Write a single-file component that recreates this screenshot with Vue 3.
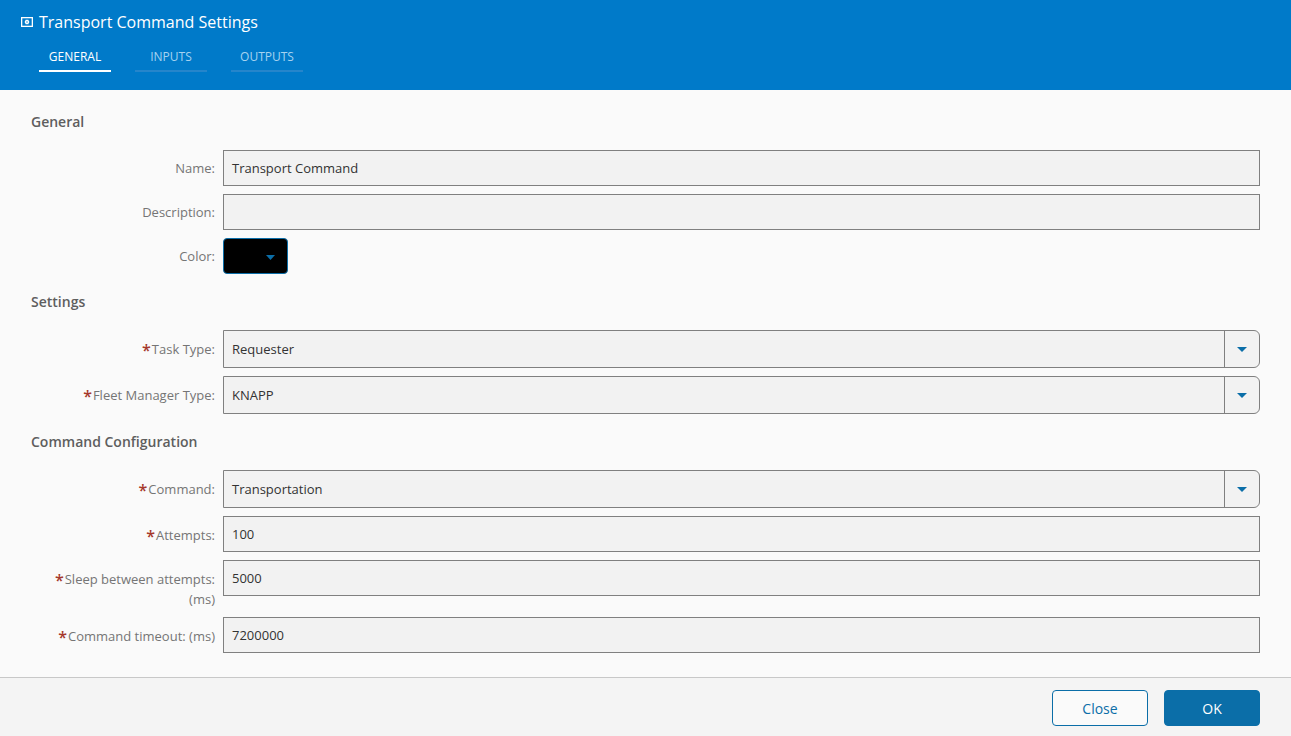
<script setup>
const tabs = ['General', 'Inputs', 'Outputs']
const sections = [
  { title: 'General', cls: 'tight', rows: [
    { label: 'Name:', value: 'Transport Command' },
    { label: 'Description:', value: '' },
    { label: 'Color:', type: 'color' }
  ] },
  { title: 'Settings', rows: [
    { label: 'Task Type:', value: 'Requester', req: true, type: 'select' },
    { label: 'Fleet Manager Type:', value: 'KNAPP', req: true, type: 'select' }
  ] },
  { title: 'Command Configuration', rows: [
    { label: 'Command:', value: 'Transportation', req: true, type: 'select' },
    { label: 'Attempts:', value: '100', req: true },
    { label: 'Sleep between attempts: (ms)', value: '5000', req: true },
    { label: 'Command timeout: (ms)', value: '7200000', req: true }
  ] }
]
</script>

<template>
  <div class="page">
    <header class="head">
      <div class="title">
        <svg class="ticon" width="12" height="10" viewBox="0 0 12 10">
          <rect x="0" y="0" width="12" height="10" fill="#fff" />
          <rect x="1.300" y="1.300" width="9.400" height="7.400" fill="#007ac9" />
          <path d="M6 2.200l.6 .8 .9-.2 .1 .9 .8 .5-.5 .8 .5 .8-.8 .5-.1 .9-.9-.2-.6 .8-.6-.8-.9 .2-.1-.9-.8-.5 .5-.8-.5-.8 .8-.5 .1-.9 .9 .2z" fill="#fff" />
          <circle cx="6" cy="5" r=".7" fill="#007ac9" />
        </svg>
        <span>Transport Command Settings</span>
      </div>
      <nav class="tabs">
        <div v-for="(t, i) in tabs" :key="t" class="tab" :class="{ on: i === 0 }">{{ t }}</div>
      </nav>
    </header>

    <main class="body">
      <section v-for="s in sections" :key="s.title" :class="s.cls">
        <h2>{{ s.title }}</h2>
        <div class="rows">
          <div v-for="r in s.rows" :key="r.label" class="row">
            <label><span v-if="r.req" class="req">*</span>{{ r.label }}</label>
            <div v-if="r.type === 'color'" class="color">
              <svg class="caret" width="9" height="5" viewBox="0 0 9 5"><path d="M0 0h9L4.500 5z" fill="#0b6ea8" /></svg>
            </div>
            <div v-else-if="r.type === 'select'" class="select">
              <span class="val">{{ r.value }}</span>
              <span class="drop">
                <svg width="10" height="5" viewBox="0 0 10 5"><path d="M0 0h10L5 5z" fill="#0b6ea8" /></svg>
              </span>
            </div>
            <div v-else class="input">{{ r.value }}</div>
          </div>
        </div>
      </section>
    </main>

    <footer class="foot">
      <button class="btn ghost">Close</button>
      <button class="btn solid">OK</button>
    </footer>
  </div>
</template>

<style>
html, body { margin: 0; }
</style>

<style scoped>
.page {
  height: 736px;
  display: flex;
  flex-direction: column;
  overflow: hidden;
  font-family: "Open Sans", "Noto Sans", sans-serif;
  font-size: 13px;
  color: #333;
}
.head {
  height: 90px;
  flex: none;
  box-sizing: border-box;
  background: #007ac9;
  padding: 11px 0 0 21px;
  color: #fff;
}
.title {
  display: flex;
  align-items: center;
  gap: 6px;
  font-size: 16px;
  line-height: 22px;
}
.ticon { flex: none; }
.tabs {
  display: flex;
  gap: 24px;
  margin: 9px 0 0 18px;
}
.tab {
  width: 72px;
  height: 30px;
  box-sizing: border-box;
  border-bottom: 2px solid #2585cb;
  text-align: center;
  font-size: 12px;
  line-height: 30px;
  text-transform: uppercase;
  color: #a6d3f0;
}
.tab.on {
  color: #fff;
  border-bottom-color: #fff;
}
.body {
  flex: 1;
  background: #fafafa;
  padding: 22px 31px 0;
}
section + section { margin-top: 18px; }
h2 {
  margin: 0 0 18px;
  font-size: 14px;
  line-height: 20px;
  font-weight: 600;
  color: #5e5e5e;
}
.rows {
  display: flex;
  flex-direction: column;
  gap: 8px;
}
.row {
  display: flex;
  align-items: flex-start;
  gap: 8px;
}
label {
  width: 184px;
  flex: none;
  padding-top: 9px;
  line-height: 20px;
  text-align: right;
  color: #757575;
}
.tight label { padding-top: 8px; }
.req {
  color: #a5382b;
  font-size: 16px;
  font-weight: 600;
  line-height: 1;
  margin-right: 1px;
  vertical-align: -2px;
}
.input, .select {
  flex: 1;
  box-sizing: border-box;
  background: #f2f2f2;
  border: 1px solid #808080;
  padding: 0 8px;
  color: #333;
}
.input {
  height: 36px;
  line-height: 34px;
}
.select {
  height: 38px;
  line-height: 36px;
  display: flex;
  justify-content: space-between;
  padding-right: 0;
  border-radius: 0 6px 6px 0;
}
.drop {
  width: 34px;
  border-left: 1px solid #808080;
  display: flex;
  align-items: center;
  justify-content: center;
}
.color {
  width: 65px;
  height: 36px;
  box-sizing: border-box;
  background: #000;
  border: 1px solid #0b6ea8;
  border-radius: 4px;
  display: flex;
  align-items: center;
  justify-content: flex-end;
  padding: 2px 12px 0 0;
}
.foot {
  flex: none;
  height: 59px;
  box-sizing: border-box;
  background: #f4f4f4;
  border-top: 1px solid #c8c8c8;
  padding: 12px 31px 0 0;
  display: flex;
  justify-content: flex-end;
  gap: 16px;
}
.btn {
  width: 96px;
  height: 36px;
  box-sizing: border-box;
  border-radius: 4px;
  border: 1px solid #0b6ea8;
  font-family: inherit;
  font-size: 14px;
  padding: 0;
}
.ghost {
  background: #fafafa;
  color: #0b6ea8;
}
.solid {
  background: #0b6ea8;
  color: #fff;
}
</style>
